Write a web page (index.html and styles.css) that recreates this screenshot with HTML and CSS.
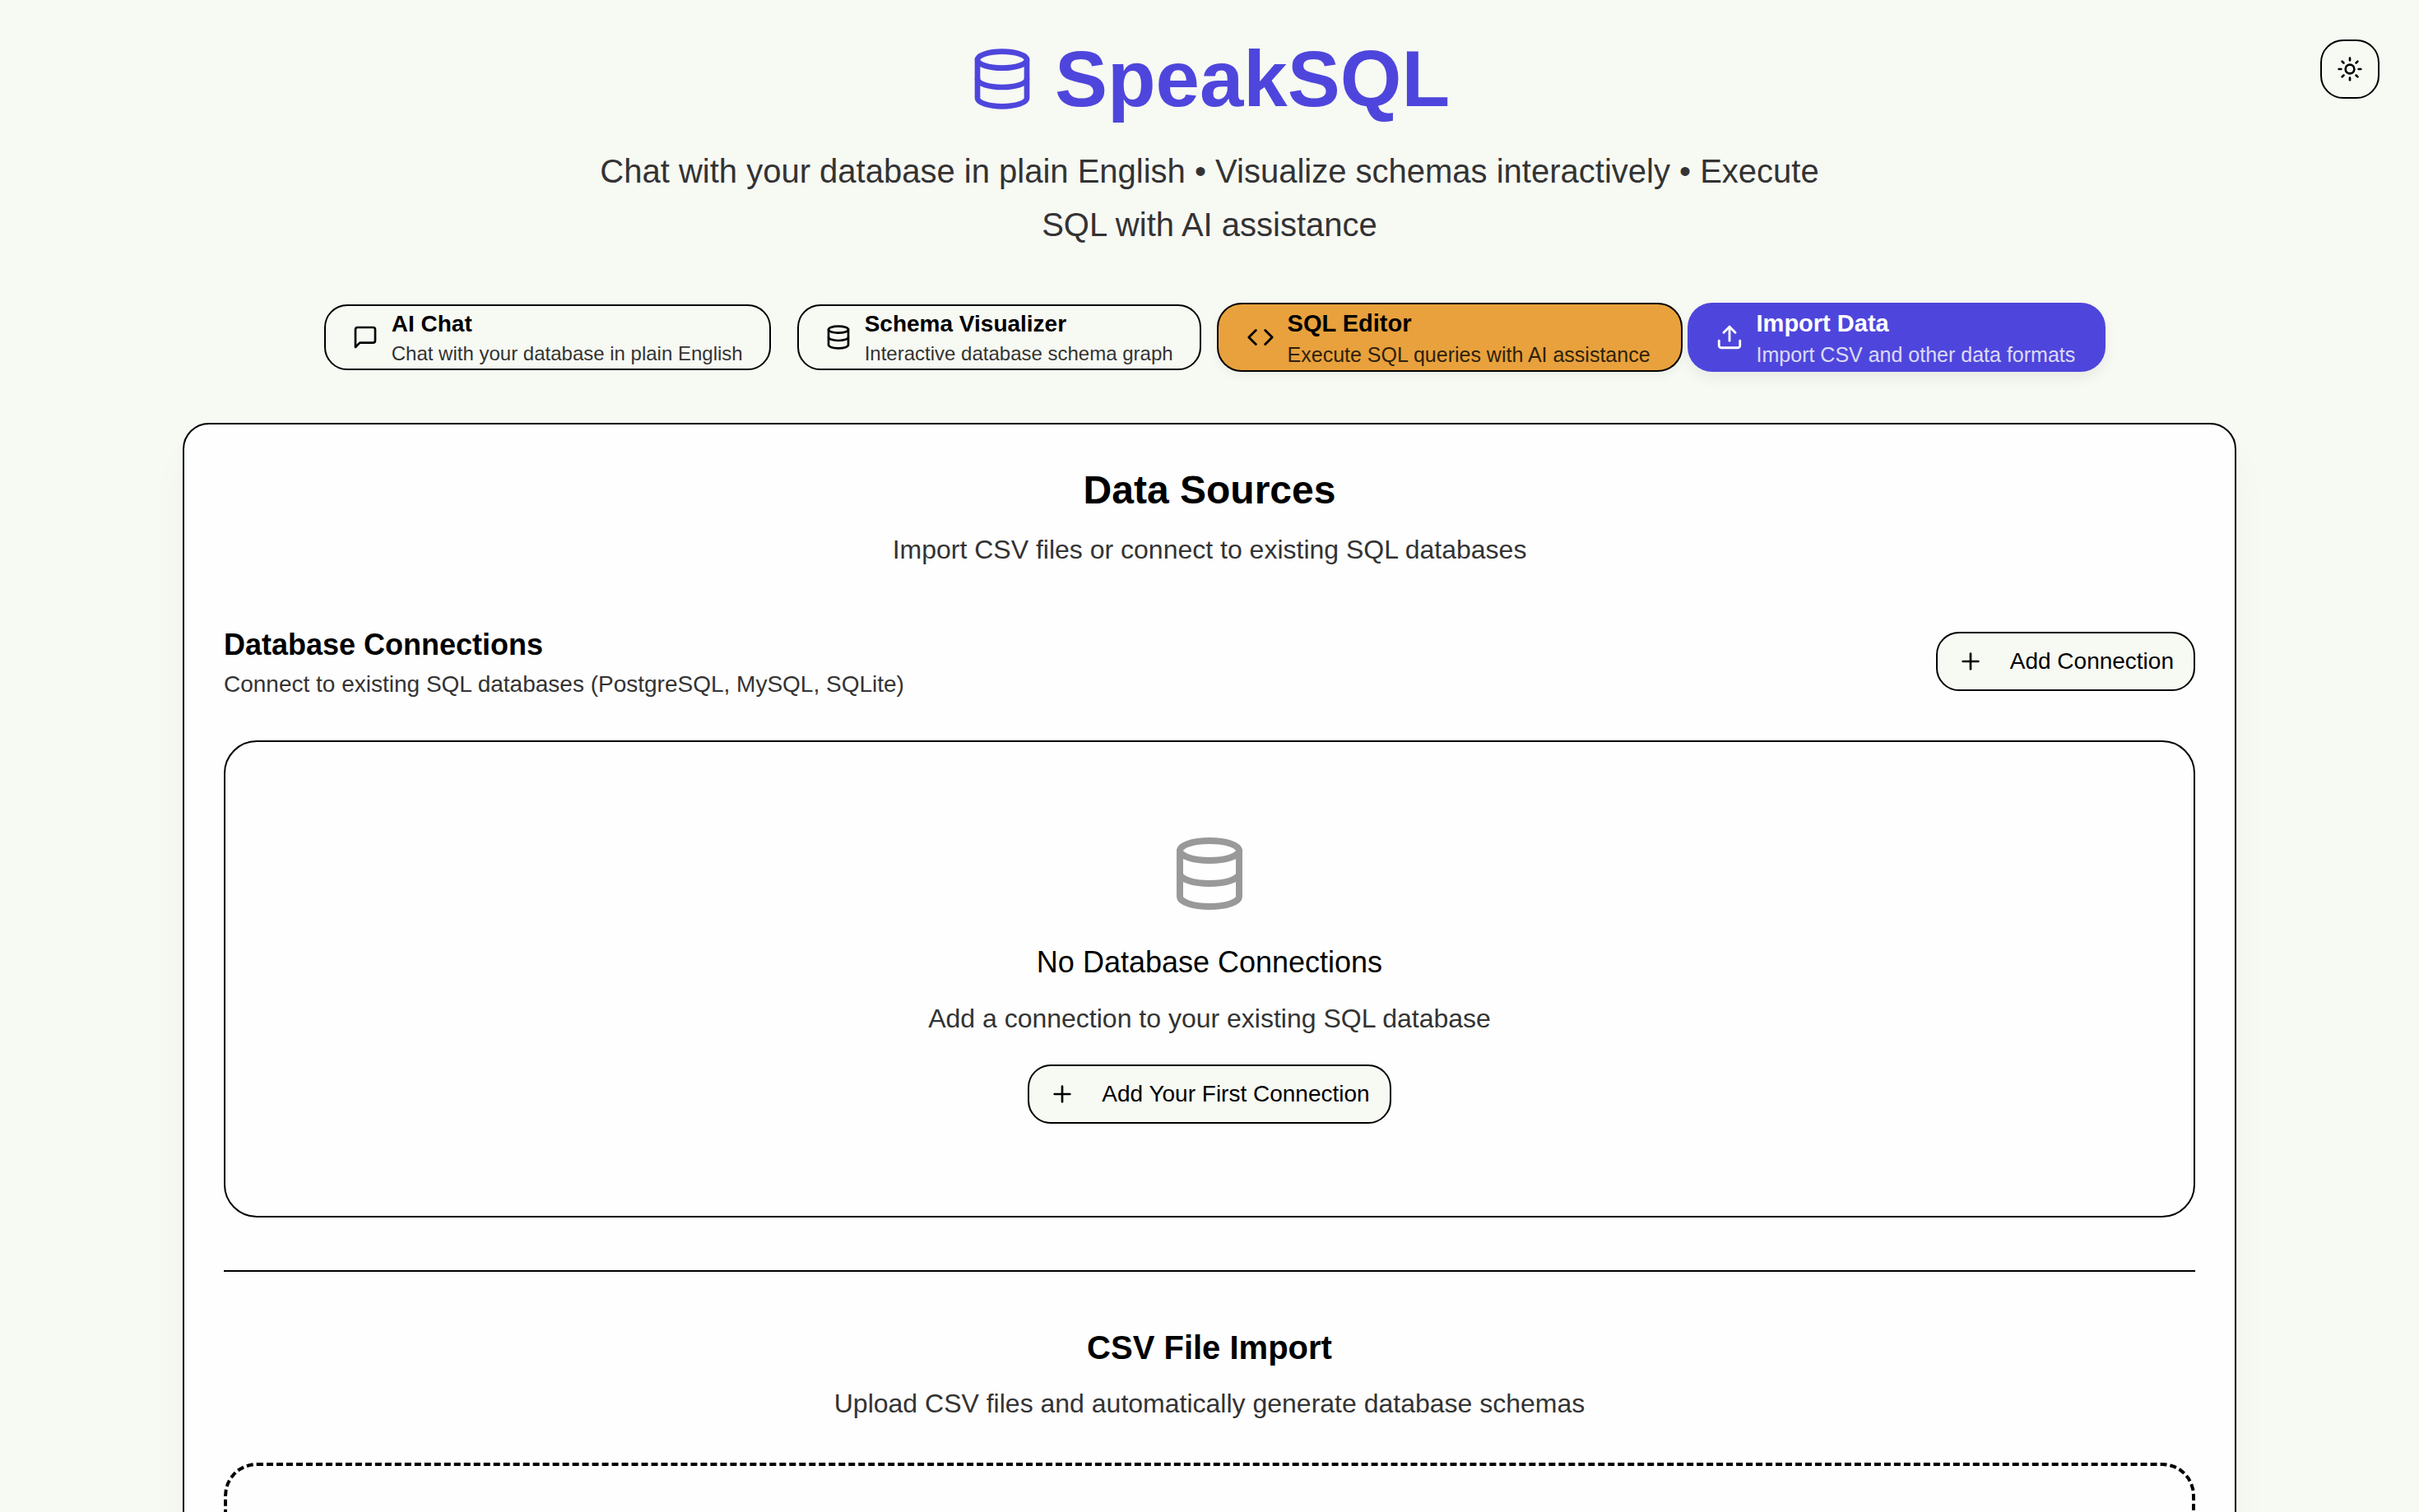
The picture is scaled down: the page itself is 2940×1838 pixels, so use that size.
FILE: index.html
```html
<!DOCTYPE html>
<html lang="en">
<head>
  <meta charset="utf-8">
  <meta name="viewport" content="width=device-width, initial-scale=1">
  <title>SpeakSQL</title>
  <link rel="stylesheet" href="styles.css">
</head>
<body>
  <svg class="sprite" aria-hidden="true">
    <symbol id="icon-database" viewBox="0 0 24 24">
      <ellipse cx="12" cy="5" rx="9" ry="3"/>
      <path d="M3 5V19A9 3 0 0 0 21 19V5"/>
      <path d="M3 12A9 3 0 0 0 21 12"/>
    </symbol>
    <symbol id="icon-message" viewBox="0 0 24 24">
      <path d="M21 15a2 2 0 0 1-2 2H7l-4 4V5a2 2 0 0 1 2-2h14a2 2 0 0 1 2 2z"/>
    </symbol>
    <symbol id="icon-code" viewBox="0 0 24 24">
      <path d="m16 18 6-6-6-6"/>
      <path d="m8 6-6 6 6 6"/>
    </symbol>
    <symbol id="icon-upload" viewBox="0 0 24 24">
      <path d="M12 3v12"/>
      <path d="m17 8-5-5-5 5"/>
      <path d="M21 15v4a2 2 0 0 1-2 2H5a2 2 0 0 1-2-2v-4"/>
    </symbol>
    <symbol id="icon-plus" viewBox="0 0 24 24">
      <path d="M5 12h14"/>
      <path d="M12 5v14"/>
    </symbol>
    <symbol id="icon-sun" viewBox="0 0 24 24">
      <circle cx="12" cy="12" r="4"/>
      <path d="M12 2v2"/>
      <path d="M12 20v2"/>
      <path d="m4.93 4.93 1.41 1.41"/>
      <path d="m17.66 17.66 1.41 1.41"/>
      <path d="M2 12h2"/>
      <path d="M20 12h2"/>
      <path d="m6.34 17.66-1.41 1.41"/>
      <path d="m19.07 4.93-1.41 1.41"/>
    </symbol>
  </svg>

  <div class="app">
    <button class="theme-toggle" type="button" aria-label="Toggle theme">
      <svg class="icon"><use href="#icon-sun"/></svg>
    </button>

    <div class="container">
      <header class="header">
        <h1 class="brand">
          <svg class="brand-icon"><use href="#icon-database"/></svg>
          <span>SpeakSQL</span>
        </h1>
        <p class="tagline">Chat with your database in plain English • Visualize schemas interactively • Execute SQL with AI assistance</p>
      </header>

      <nav class="tabs" aria-label="Views">
        <button class="tab" type="button">
          <svg class="icon"><use href="#icon-message"/></svg>
          <span class="tab-text">
            <span class="tab-title">AI Chat</span>
            <span class="tab-desc">Chat with your database in plain English</span>
          </span>
        </button>
        <button class="tab" type="button">
          <svg class="icon"><use href="#icon-database"/></svg>
          <span class="tab-text">
            <span class="tab-title">Schema Visualizer</span>
            <span class="tab-desc">Interactive database schema graph</span>
          </span>
        </button>
        <button class="tab tab-raised tab-accent" type="button">
          <svg class="icon"><use href="#icon-code"/></svg>
          <span class="tab-text">
            <span class="tab-title">SQL Editor</span>
            <span class="tab-desc">Execute SQL queries with AI assistance</span>
          </span>
        </button>
        <button class="tab tab-raised tab-active" type="button" aria-current="page">
          <svg class="icon"><use href="#icon-upload"/></svg>
          <span class="tab-text">
            <span class="tab-title">Import Data</span>
            <span class="tab-desc">Import CSV and other data formats</span>
          </span>
        </button>
      </nav>

      <main class="panel">
        <div class="intro">
          <h2 class="panel-title">Data Sources</h2>
          <p class="lead">Import CSV files or connect to existing SQL databases</p>
        </div>

        <section class="connections">
          <div class="section-head">
            <div>
              <h3 class="section-title">Database Connections</h3>
              <p class="section-desc">Connect to existing SQL databases (PostgreSQL, MySQL, SQLite)</p>
            </div>
            <button class="button" type="button">
              <svg class="icon"><use href="#icon-plus"/></svg>
              Add Connection
            </button>
          </div>

          <div class="empty">
            <svg class="empty-icon"><use href="#icon-database"/></svg>
            <h3 class="empty-title">No Database Connections</h3>
            <p class="lead">Add a connection to your existing SQL database</p>
            <button class="button" type="button">
              <svg class="icon"><use href="#icon-plus"/></svg>
              Add Your First Connection
            </button>
          </div>
        </section>

        <section class="import">
          <div class="import-head">
            <h3 class="import-title">CSV File Import</h3>
            <p class="lead">Upload CSV files and automatically generate database schemas</p>
          </div>
          <div class="dropzone"></div>
        </section>
      </main>
    </div>
  </div>
</body>
</html>
```

FILE: styles.css
```css
:root {
  --bg: #f7f9f3;
  --surface: #fefefe;
  --ink: #000;
  --muted: #333;
  --primary: #4e46dc;
  --accent: #e8a13c;
}

* {
  box-sizing: border-box;
  margin: 0;
  padding: 0;
}

body {
  background: var(--bg);
  color: var(--ink);
  font-family: "Liberation Sans", Helvetica, Arial, sans-serif;
  font-size: 32px;
  line-height: 48px;
}

button {
  font: inherit;
  color: inherit;
  cursor: pointer;
}

svg {
  display: block;
  flex: none;
  fill: none;
  stroke: currentColor;
  stroke-width: 2;
  stroke-linecap: round;
  stroke-linejoin: round;
}

.sprite {
  position: absolute;
  width: 0;
  height: 0;
}

.icon {
  width: 32px;
  height: 32px;
}

.app {
  height: 100vh;
  overflow-y: auto;
  scrollbar-width: none;
}

.container {
  display: flex;
  flex-direction: column;
  gap: 64px;
  max-width: 2560px;
  margin: 0 auto;
  padding: 48px 32px;
}

/* Floats over the header in the top corner */
.theme-toggle {
  position: absolute;
  top: 48px;
  right: 48px;
  display: flex;
  align-items: center;
  justify-content: center;
  width: 72px;
  height: 72px;
  background: var(--bg);
  border: 2px solid var(--ink);
  border-radius: 28px;
}

.header {
  display: flex;
  flex-direction: column;
  align-items: center;
  gap: 32px;
}

.brand {
  display: flex;
  align-items: center;
  gap: 24px;
  color: var(--primary);
  font-size: 96px;
  font-weight: 700;
  line-height: 96px;
}

.brand-icon {
  width: 80px;
  height: 80px;
}

.tagline {
  max-width: 1536px;
  color: var(--muted);
  font-size: 40px;
  line-height: 65px;
  text-align: center;
}

.tabs {
  display: flex;
  align-items: center;
  justify-content: center;
  gap: 32px;
  height: 80px;
}

.tab {
  display: flex;
  align-items: center;
  gap: 16px;
  height: 80px;
  padding: 0 32px;
  background: var(--bg);
  border: 2px solid var(--ink);
  border-radius: 28px;
  text-align: left;
  white-space: nowrap;
}

.tab-text {
  display: flex;
  flex-direction: column;
}

.tab-title {
  font-size: 28px;
  font-weight: 700;
  line-height: 40px;
}

.tab-desc {
  font-size: 24px;
  line-height: 32px;
  opacity: 0.8;
}

.tab-raised {
  gap: 16px;
  height: 84px;
  margin: 0 -13px;
  padding: 0 37px 0 34px;
  border-radius: 30px;
}

.tab-raised .icon {
  width: 34px;
  height: 34px;
}

.tab-raised .tab-title {
  font-size: 29px;
  line-height: 42px;
}

.tab-raised .tab-desc {
  font-size: 25px;
  line-height: 34px;
}

.tab-accent {
  background: var(--accent);
  box-shadow: 0 4px 12px rgba(0, 0, 0, 0.05);
}

.tab-active {
  background: var(--primary);
  border: 0;
  color: #fff;
  box-shadow: 0 8px 16px rgba(0, 0, 0, 0.06);
}

.panel {
  display: flex;
  flex-direction: column;
  gap: 64px;
  padding: 48px;
  background: var(--surface);
  border: 2px solid var(--ink);
  border-radius: 32px;
  box-shadow: 0 32px 48px rgba(0, 0, 0, 0.03);
}

.intro,
.import-head {
  display: flex;
  flex-direction: column;
  gap: 16px;
  text-align: center;
}

.panel-title {
  font-size: 48px;
  font-weight: 700;
  line-height: 64px;
}

.lead {
  color: var(--muted);
}

.connections,
.import {
  display: flex;
  flex-direction: column;
  gap: 48px;
}

.section-head {
  display: flex;
  align-items: center;
  justify-content: space-between;
}

.section-title {
  font-size: 36px;
  font-weight: 700;
  line-height: 56px;
}

.section-desc {
  color: var(--muted);
  font-size: 28px;
  line-height: 40px;
}

.button {
  display: flex;
  align-items: center;
  gap: 32px;
  height: 72px;
  padding: 0 24px;
  background: var(--bg);
  border: 2px solid var(--ink);
  border-radius: 28px;
  font-size: 28px;
  line-height: 40px;
  white-space: nowrap;
}

.empty {
  display: flex;
  flex-direction: column;
  align-items: center;
  padding: 112px 48px;
  border: 2px solid var(--ink);
  border-radius: 40px;
  text-align: center;
}

.empty-icon {
  width: 96px;
  height: 96px;
  margin-bottom: 32px;
  color: #999;
}

.empty-title {
  margin-bottom: 16px;
  font-size: 36px;
  font-weight: 400;
  line-height: 56px;
}

.empty .button {
  margin-top: 32px;
}

.import {
  padding-top: 64px;
  border-top: 2px solid var(--ink);
}

.import-title {
  font-size: 40px;
  font-weight: 700;
  line-height: 56px;
}

.dropzone {
  min-height: 480px;
  border: 4px dashed var(--ink);
  border-radius: 40px;
}
```
